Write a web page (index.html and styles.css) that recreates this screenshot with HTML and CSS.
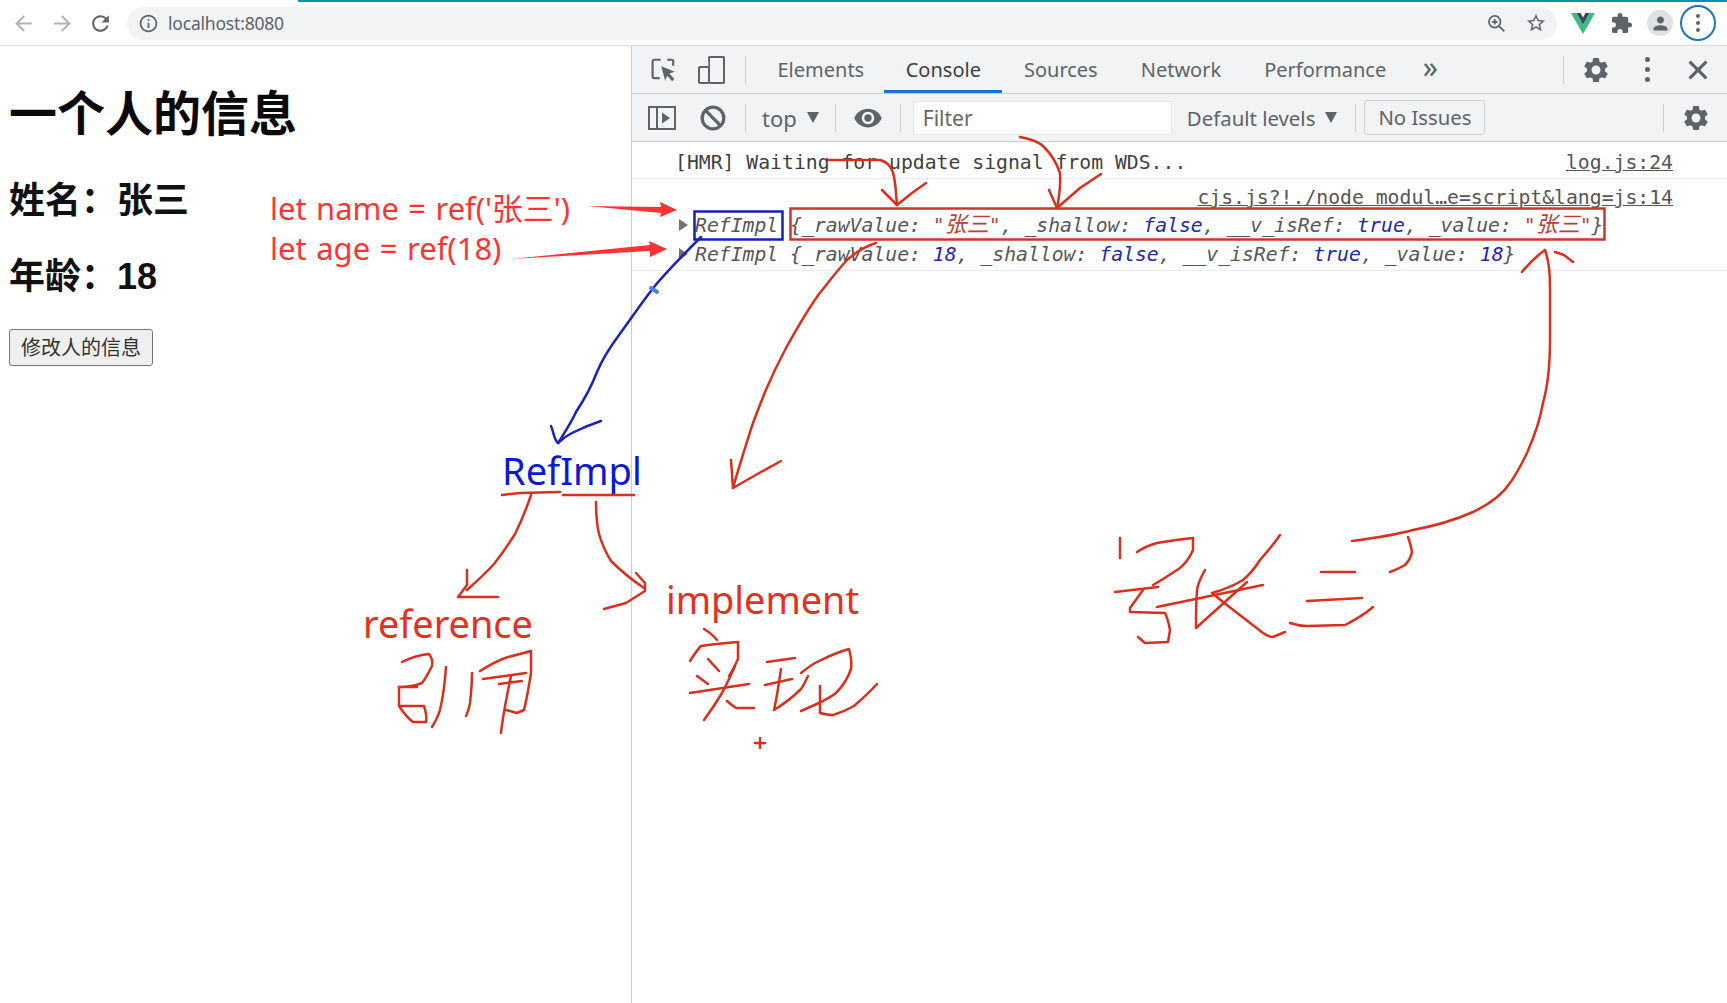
FILE: index.html
```html
<!DOCTYPE html>
<html lang="zh">
<head>
<meta charset="utf-8">
<title>localhost:8080</title>
<link rel="stylesheet" href="styles.css">
</head>
<body>
<svg class="defs" width="0" height="0" aria-hidden="true">
  <symbol id="i-gear" viewBox="0 0 24 24"><path d="M19.14 12.94c.04-.3.06-.61.06-.94 0-.32-.02-.64-.07-.94l2.03-1.58c.18-.14.23-.41.12-.61l-1.92-3.32c-.12-.22-.37-.29-.59-.22l-2.39.96c-.5-.38-1.03-.7-1.62-.94l-.36-2.54c-.04-.24-.24-.41-.48-.41h-3.84c-.24 0-.43.17-.47.41l-.36 2.54c-.59.24-1.13.57-1.62.94l-2.39-.96c-.22-.08-.47 0-.59.22L2.74 8.87c-.12.21-.08.47.12.61l2.03 1.58c-.05.3-.09.63-.09.94s.02.64.07.94l-2.03 1.58c-.18.14-.23.41-.12.61l1.92 3.32c.12.22.37.29.59.22l2.39-.96c.5.38 1.03.7 1.62.94l.36 2.54c.05.24.24.41.48.41h3.84c.24 0 .44-.17.47-.41l.36-2.54c.59-.24 1.13-.56 1.62-.94l2.39.96c.22.08.47 0 .59-.22l1.92-3.32c.12-.22.07-.47-.12-.61l-2.01-1.58zM12 15.6c-1.98 0-3.6-1.62-3.6-3.6s1.62-3.6 3.6-3.6 3.6 1.62 3.6 3.6-1.62 3.6-3.6 3.6z"/></symbol>
</svg>
<div class="app">
  <header class="chrome">
    <div class="load-bar"></div>
    <div class="nav">
      <svg class="nav-btn dim" viewBox="0 0 24 24"><path d="M20 11H7.83l5.59-5.59L12 4l-8 8 8 8 1.41-1.41L7.83 13H20v-2z"/></svg>
      <svg class="nav-btn dim" viewBox="0 0 24 24"><path d="M4 11h12.17l-5.59-5.59L12 4l8 8-8 8-1.41-1.41L16.17 13H4v-2z"/></svg>
      <svg class="nav-btn" viewBox="0 0 24 24"><path d="M17.65 6.35C16.2 4.9 14.21 4 12 4c-4.42 0-7.99 3.58-7.99 8s3.57 8 7.99 8c3.73 0 6.84-2.55 7.73-6h-2.08c-.82 2.33-3.04 4-5.65 4-3.31 0-6-2.69-6-6s2.69-6 6-6c1.66 0 3.14.69 4.22 1.78L13 11h7V4l-2.35 2.35z"/></svg>
      <div class="omnibox">
        <svg class="omni-info" viewBox="0 0 24 24"><path d="M11 7h2v2h-2zm0 4h2v6h-2zm1-9C6.48 2 2 6.48 2 12s4.48 10 10 10 10-4.48 10-10S17.52 2 12 2zm0 18c-4.41 0-8-3.59-8-8s3.59-8 8-8 8 3.59 8 8-3.59 8-8 8z"/></svg>
        <span class="url">localhost:8080</span>
        <svg class="omni-zoom" viewBox="0 0 24 24"><circle cx="10" cy="10" r="6.6" fill="none" stroke="#5f6368" stroke-width="2"/><path d="M15 15l6 6M10 6.8v6.4M6.8 10h6.4" fill="none" stroke="#5f6368" stroke-width="2"/></svg>
        <svg class="omni-star" viewBox="0 0 24 24"><path d="M22 9.24l-7.19-.62L12 2 9.19 8.63 2 9.24l5.46 4.73L5.82 21 12 17.27 18.18 21l-1.63-7.03L22 9.24zM12 15.4l-3.76 2.27 1-4.28-3.32-2.88 4.38-.38L12 6.1l1.71 4.04 4.38.38-3.32 2.88 1 4.28L12 15.4z"/></svg>
      </div>
      <svg class="vue" viewBox="0 0 24 22"><path fill="#41b883" d="M0 1h5.5L12 12.5 18.5 1H24L12 22z"/><path fill="#34495e" d="M5.5 1h4L12 5.5 14.5 1h4L12 12.5z"/></svg>
      <svg class="puzzle" viewBox="0 0 24 24"><path d="M20.5 11H19V7c0-1.1-.9-2-2-2h-4V3.5C13 2.12 11.88 1 10.5 1S8 2.12 8 3.5V5H4c-1.1 0-1.99.9-1.99 2v3.8H3.5c1.49 0 2.7 1.21 2.7 2.7s-1.21 2.7-2.7 2.7H2V20c0 1.1.9 2 2 2h3.8v-1.5c0-1.49 1.21-2.7 2.7-2.7 1.49 0 2.7 1.21 2.7 2.7V22H17c1.1 0 2-.9 2-2v-4h1.5c1.38 0 2.5-1.12 2.5-2.5S21.88 11 20.5 11z"/></svg>
      <div class="avatar"><svg viewBox="0 0 24 24"><path d="M12 12c2.21 0 4-1.79 4-4s-1.79-4-4-4-4 1.79-4 4 1.79 4 4 4zm0 2c-2.67 0-8 1.34-8 4v2h16v-2c0-2.66-5.33-4-8-4z"/></svg></div>
      <div class="kebab"><i></i><i></i><i></i></div>
    </div>
  </header>

  <main class="split">
    <section class="page">
      <h1 class="title">一个人的信息</h1>
      <h2 class="info info-name">姓名&#xFF1A;张三</h2>
      <h2 class="info info-age">年龄&#xFF1A;18</h2>
      <button class="change">修改人的信息</button>
    </section>

    <section class="devtools">
      <div class="tabbar">
        <svg class="dt-inspect" viewBox="0 0 24 22"><path d="M9 1.5H3A1.5 1.5 0 0 0 1.5 3v14A1.500 1.500 0 0 0 3 18.500h5M15 1.500h4A1.500 1.500 0 0 1 20.500 3v4" fill="none" stroke="#5f6368" stroke-width="2"/><path d="M9.500 7.500l12.500 5-5 1.800 4.500 5-2 2-4.500-5-2 4.500z" fill="#5f6368"/></svg>
        <svg class="dt-device" viewBox="0 0 27 28"><path d="M10 1.500A1.500 1.500 0 0 1 11.500 0h14A1.500 1.500 0 0 1 27 1.500v25a1.500 1.500 0 0 1-1.500 1.500h-14M12 2v24h13V2z" fill="#5f6368"/><rect x="1" y="11" width="10" height="16" rx="1" fill="#f1f3f4" stroke="#5f6368" stroke-width="2"/></svg>
        <span class="sep sep-tabs"></span>
        <nav class="tabs">
          <a class="tab">Elements</a>
          <a class="tab active">Console</a>
          <a class="tab">Sources</a>
          <a class="tab">Network</a>
          <a class="tab">Performance</a>
        </nav>
        <span class="more">»</span>
        <span class="sep sep-right"></span>
        <svg class="gear gear-top"><use href="#i-gear"/></svg>
        <div class="dots"><i></i><i></i><i></i></div>
        <svg class="close" viewBox="0 0 20 20"><path d="M3 3l14 14M17 3L3 17" stroke="#5f6368" stroke-width="2.600" fill="none"/></svg>
      </div>

      <div class="toolbar">
        <svg class="dt-side" viewBox="0 0 28 24"><path d="M1 1h26v22H1zM9 1v22" fill="none" stroke="#5f6368" stroke-width="2"/><path d="M14 6.500l8 5.500-8 5.500z" fill="#5f6368"/></svg>
        <svg class="dt-block" viewBox="0 0 24 24"><circle cx="12" cy="12" r="10" fill="none" stroke="#5f6368" stroke-width="3"/><path d="M5 5l14 14" stroke="#5f6368" stroke-width="3"/></svg>
        <span class="sep sep-a"></span>
        <span class="ctx">top</span><span class="caret caret-top"></span>
        <span class="sep sep-b"></span>
        <svg class="dt-eye" viewBox="0 0 24 24"><path d="M12 4.500C7 4.500 2.730 7.610 1 12c1.730 4.390 6 7.500 11 7.500s9.270-3.110 11-7.500c-1.730-4.390-6-7.500-11-7.500zM12 17c-2.760 0-5-2.240-5-5s2.240-5 5-5 5 2.240 5 5-2.240 5-5 5zm0-8c-1.660 0-3 1.340-3 3s1.340 3 3 3 3-1.340 3-3-1.340-3-3-3z"/></svg>
        <span class="sep sep-c"></span>
        <div class="filter">Filter</div>
        <span class="levels">Default levels</span><span class="caret caret-levels"></span>
        <span class="sep sep-d"></span>
        <div class="issues">No Issues</div>
        <span class="sep sep-e"></span>
        <svg class="gear gear-bottom"><use href="#i-gear"/></svg>
      </div>

      <div class="console">
        <div class="msg msg-hmr">
          <span class="msg-text">[HMR] Waiting for update signal from WDS...</span>
          <a class="src">log.js:24</a>
        </div>
        <div class="msg-group">
          <a class="src src-line">cjs.js?!./node_modul…e=script&amp;lang=js:14</a>
          <div class="obj"><span class="tri"></span><span class="o">RefImpl {_rawValue: <span class="str">"<span class="zh">张三</span>"</span>, _shallow: <span class="kw">false</span>, __v_isRef: <span class="kw">true</span>, _value: <span class="str">"<span class="zh">张三</span>"</span>}</span></div>
          <div class="obj"><span class="tri"></span><span class="o">RefImpl {_rawValue: <span class="num">18</span>, _shallow: <span class="kw">false</span>, __v_isRef: <span class="kw">true</span>, _value: <span class="num">18</span>}</span></div>
        </div>
      </div>
    </section>
  </main>
</div>

<!-- Hand-drawn annotations layered over the screenshot -->
<span class="note note-name">let name = ref('张三')</span>
<span class="note note-age">let age = ref(18)</span>
<span class="note note-impl-class">RefImpl</span>
<span class="note note-reference">reference</span>
<span class="note note-implement">implement</span>

<svg class="ink" viewBox="0 0 1727 1003" width="1727" height="1003">
  <g class="flat-red">
    <polygon points="587,206 661,207 660,202 677,210 660,217 661,213"/>
    <polygon points="511,259 650,245 649,241 667,249 650,257 650,251"/>
  </g>
  <g class="box-red"><rect x="790.500" y="208.500" width="814" height="31"/></g>
  <g class="box-blue"><rect x="694.500" y="211.500" width="88" height="28"/></g>
  <g class="pen-blue">
    <path d="M701 237C680 258 668 270 654 287C640 305 630 320 619 335C608 350 602 360 597 372C590 390 584 400 576 412C570 425 563 435 558 443"/>
    <path d="M551 426C554 432 553 438 558 443C563 438 568 435 572 433C582 428 592 424 601 421"/>
    <path class="blob" d="M651 288l6 4"/>
  </g>
  <g class="pen-red">
    <path d="M828 160H880C890 163 893 170 894 177C896 186 896 196 897 205"/>
    <path d="M882 190L897 205L912 193L926 183"/>
    <path d="M1020 137C1032 139 1040 143 1044 147C1052 155 1057 164 1060 173C1061 186 1059 198 1057 208"/>
    <path d="M1049 190L1057 208L1080 188L1101 174"/>
    <path d="M876 243C866 246 856 252 847 260C836 272 828 283 819 294C806 312 796 330 786 348C778 363 771 378 765 392C760 405 755 417 751 429C745 448 738 470 733 488"/>
    <path d="M731 460L733 488L761 472L781 461"/>
    <path d="M502 495L520 493L560 492M563 495H634"/>
    <path d="M531 495C526 510 521 522 515 534C508 545 501 555 494 564C486 573 476 582 467 590"/>
    <path d="M467 570V585L458 597H498"/>
    <path d="M596 502C596 515 597 525 599 534C602 544 606 553 611 561C620 570 632 580 644 588"/>
    <path d="M636 573L645 583V591L626 603L604 609"/>
    <path d="M402 662C410 658 420 655 429 654C432 658 433 662 432 666C429 672 426 678 422 683C415 686 407 687 399 687H417"/>
    <path d="M399 687V706H424C426 712 427 717 426 722H413C407 718 403 712 399 706"/>
    <path d="M446 667C445 682 443 697 440 710C438 717 435 722 432 727"/>
    <path d="M472 673C472 684 471 694 470 703C469 708 468 712 466 716"/>
    <path d="M480 671C488 666 498 660 508 657C516 655 524 653 531 651V673C529 686 527 698 524 710L517 713L506 710"/>
    <path d="M483 679L526 673M499 684L522 681M511 676C507 695 503 714 501 733"/>
    <path d="M704 629C709 632 714 636 717 640"/>
    <path d="M690 661C694 655 697 650 701 646C714 644 726 643 738 642V659C735 665 733 670 729 676"/>
    <path d="M708 659L719 671M697 676L708 684M690 693L749 684"/>
    <path d="M735 666C731 675 727 684 722 693C716 703 710 712 704 720M727 701C730 704 733 706 736 708H754"/>
    <path d="M767 662L795 658M765 685L792 679"/>
    <path d="M781 669C779 683 777 697 774 710C784 704 793 697 801 689C804 685 806 680 808 676"/>
    <path d="M801 673C806 669 811 665 817 662C827 657 838 652 849 649C851 656 852 662 851 669C848 678 843 686 836 693C831 697 825 700 819 703L801 711"/>
    <path d="M820 686V713C824 714 828 715 833 715C840 713 847 710 854 706C862 699 870 692 877 684"/>
    <path d="M760 738V748M755 743H765"/>
    <path d="M1352 541C1375 538 1395 535 1413 530C1435 526 1455 520 1473 512C1490 504 1502 495 1510 483C1518 472 1522 463 1527 453C1535 435 1540 420 1543 403C1548 385 1550 360 1550 340V287C1550 270 1548 258 1545 250"/>
    <path d="M1522 272C1530 262 1538 255 1545 250M1555 252L1564 255L1573 262"/>
    <path d="M1120 538V558"/>
    <path d="M1137 552C1143 548 1150 545 1157 543C1169 541 1181 539 1193 538V550C1190 557 1186 563 1180 568C1171 574 1162 580 1153 585"/>
    <path d="M1115 592L1158 587"/>
    <path d="M1143 590L1130 608V612L1165 613C1168 619 1169 625 1170 630L1168 642L1145 643L1138 637"/>
    <path d="M1157 607L1263 585"/>
    <path d="M1205 570C1201 577 1198 583 1197 590C1196 603 1196 616 1196 628L1247 582"/>
    <path d="M1280 535C1274 544 1267 552 1260 560C1255 568 1249 575 1243 580C1233 586 1223 590 1212 593L1223 602L1263 633C1266 635 1270 637 1273 637L1285 632"/>
    <path d="M1321 572H1355M1307 601L1362 598"/>
    <path d="M1290 623C1296 625 1301 626 1307 626L1345 625C1355 620 1365 614 1373 607"/>
    <path d="M1408 537C1410 542 1411 547 1412 552C1411 557 1409 561 1405 565C1400 568 1395 570 1390 572"/>
  </g>
</svg>
</body>
</html>
```

FILE: styles.css
```css
* { box-sizing: border-box; }
html, body { margin: 0; height: 100%; overflow: hidden; background: #fff; }
body { position: relative; font-family: "Noto Sans", "Noto Sans CJK SC", sans-serif; color: #000; }
.defs { position: absolute; }
.app { display: flex; flex-direction: column; height: 1003px; }

/* Browser chrome */
.chrome { height: 46px; flex: none; background: #fff; border-bottom: 1px solid #dadce0; }
.load-bar { height: 2px; margin-left: 298px; background: #0f8fb4; }
.nav { display: flex; align-items: center; height: 42px; padding-left: 11px; }
.nav svg { fill: #5f6368; flex: none; }
.nav-btn { width: 25px; height: 25px; margin-right: 14px; }
.nav-btn:nth-child(2) { margin-right: 13px; }
.nav-btn:nth-child(3) { margin-right: 15px; }
.nav .dim { fill: #b0b3b8; }
.omnibox { display: flex; align-items: center; flex: none; width: 1430px; height: 33px; margin-left: -1px; border-radius: 17px; background: #f1f3f4; padding: 0 10px 0 11px; }
.omni-info { width: 21px; height: 21px; }
.url { margin-left: 9px; font-size: 17.500px; color: #5f6368; letter-spacing: -.2px; }
.omni-zoom { width: 21px; height: 21px; margin-left: auto; }
.omni-star { width: 22px; height: 22px; margin-left: 18px; margin-right: 0; }
.vue { width: 24px; height: 22px; margin-left: 14px; }
.puzzle { width: 23px; height: 23px; margin-left: 15px; }
.avatar { flex: none; display: flex; align-items: center; justify-content: center; width: 26px; height: 26px; margin-left: 14px; border-radius: 50%; background: #dfe1e5; }
.avatar svg { width: 21px; height: 21px; }
.kebab { flex: none; display: flex; flex-direction: column; align-items: center; justify-content: center; gap: 3px; width: 36px; height: 36px; margin-left: 7px; border: 2px solid #1a73c8; border-radius: 50%; }
.kebab i { width: 4px; height: 4px; border-radius: 50%; background: #5f6368; }

/* Split */
.split { flex: 1; display: flex; min-height: 0; }
.page { flex: none; width: 632px; padding: 41px 0 0 9px; border-right: 1px solid #cbcdd1; }
.title { margin: 0 0 36px; font: 700 48px/56px "Liberation Sans", "Noto Sans CJK SC", sans-serif; color: #0a0a0a; }
.info { margin: 0; font: 700 36px/44px "Liberation Sans", "Noto Sans CJK SC", sans-serif; color: #111; }
.info-name { margin-bottom: 32px; }
.info-age { margin-bottom: 30px; }
.change { display: block; width: 144px; height: 37px; padding: 0; background: #efefef; border: 1px solid #767676; border-radius: 3px; font: 400 20px/1 "Liberation Sans", "Noto Sans CJK SC", sans-serif; color: #333; }

/* DevTools */
.devtools { flex: 1; min-width: 0; display: flex; flex-direction: column; }
.tabbar, .toolbar { flex: none; display: flex; align-items: center; background: #f1f3f4; border-bottom: 1px solid #cbcdd1; font-size: 20px; color: #5f6368; }
.tabbar { height: 48px; }
.toolbar { height: 48px; }
.sep { flex: none; width: 1px; height: 28px; background: #ccced1; }
.dt-inspect { flex: none; width: 26px; height: 24px; margin-left: 19px; }
.dt-device { flex: none; width: 27px; height: 28px; margin-left: 21px; }
.sep-tabs { margin-left: 20px; }
.tabs { display: flex; align-self: stretch; margin-left: 10px; }
.tab { display: flex; align-items: center; padding: 0 21.500px; height: 100%; border-bottom: 3px solid transparent; border-top: 3px solid transparent; }
.tab:first-child { padding-right: 20px; }
.tab.active { border-bottom-color: #1a73c8; color: #3c4043; }
.more { margin-left: 15px; font-size: 30px; line-height: 1; margin-top: -6px; color: #5f6368; }
.sep-right { margin-left: 125px; }
.gear { flex: none; width: 30px; height: 30px; fill: #5f6368; }
.gear-top { margin-left: 17px; }
.dots { flex: none; display: flex; flex-direction: column; gap: 5px; margin-left: 34px; }
.dots i { width: 5px; height: 5px; border-radius: 50%; background: #5f6368; }
.close { flex: none; width: 24px; height: 24px; margin-left: 36px; }

.dt-side { flex: none; width: 28px; height: 24px; margin-left: 16px; }
.dt-block { flex: none; width: 26px; height: 26px; margin-left: 24px; }
.sep-a { margin-left: 19px; }
.ctx { margin-left: 16px; font-size: 22px; }
.caret { flex: none; width: 0; height: 0; border-left: 6px solid transparent; border-right: 6px solid transparent; border-top: 11px solid #5f6368; }
.caret-top { margin-left: 10px; }
.sep-b { margin-left: 16px; }
.dt-eye { flex: none; width: 30px; height: 30px; fill: #5f6368; margin-left: 17px; }
.sep-c { margin-left: 17px; }
.filter { flex: none; width: 259px; height: 34px; margin-left: 12px; padding-left: 9px; background: #fff; border: 1px solid #e6e7e9; line-height: 32px; font-size: 21px; color: #666; }
.levels { margin-left: 15px; font-size: 20.400px; white-space: nowrap; }
.caret-levels { margin-left: 10px; }
.sep-d { margin-left: 18px; }
.issues { flex: none; width: 121px; height: 35px; margin-left: 8px; border: 1px solid #cfd1d4; border-radius: 3px; text-align: center; line-height: 33px; font-size: 20.300px; }
.sep-e { margin-left: 178px; }
.gear-bottom { margin-left: 17px; }

.console { flex: 1; background: #fff; font: 19.750px/29px "DejaVu Sans Mono", "Noto Sans CJK SC", monospace; color: #444; }
.msg-hmr { display: flex; justify-content: space-between; height: 37px; padding: 6px 54px 0 43px; border-bottom: 1px solid #ececec; }
.msg-text { color: #3f3f3f; }
.src { color: #555; text-decoration: underline; }
.msg-group { height: 92px; padding: 4px 54px 0 63px; border-bottom: 1px solid #ececec; }
.src-line { display: block; text-align: right; height: 28px; }
.obj { position: relative; height: 29px; white-space: nowrap; }
.o { font-style: italic; color: #565656; }
.tri { position: absolute; left: -16px; top: 8px; border-top: 6px solid transparent; border-bottom: 6px solid transparent; border-left: 9px solid #727272; }
.str { color: #b8413a; }
.zh { font-size: 22px; line-height: 1; }
.kw { color: #1c2aa8; }
.num { color: #2a1fb8; }

/* Annotations */
.note { position: absolute; white-space: nowrap; font-family: "Noto Sans", "Noto Sans CJK SC", sans-serif; }
.note-name, .note-age { left: 270px; font-size: 31px; line-height: 40px; word-spacing: 1.500px; color: #ff3333; }
.note-name { top: 188px; font-size: 30.900px; }
.note-age { top: 228px; }
.note-impl-class { left: 502px; top: 445px; font-size: 38px; line-height: 50px; color: #0a1ad0; }
.note-reference { left: 363px; top: 601px; font-size: 37.900px; line-height: 44px; color: #e4301e; }
.note-implement { left: 666px; top: 578px; font-size: 37.800px; line-height: 44px; color: #e4301e; }

.ink { position: absolute; left: 0; top: 0; pointer-events: none; }
.flat-red polygon { fill: #ff3333; }
.box-red rect { fill: none; stroke: #c9372c; stroke-width: 2.500; }
.box-blue rect { fill: none; stroke: #1422b4; stroke-width: 2.500; }
.pen-red path, .pen-blue path { fill: none; stroke-width: 2.500; stroke-linecap: round; stroke-linejoin: round; }
.pen-red path { stroke: #d92f1c; }
.pen-blue path { stroke: #1a22b8; }
.pen-blue .blob { stroke: #4d7fe0; stroke-width: 4; }
```
